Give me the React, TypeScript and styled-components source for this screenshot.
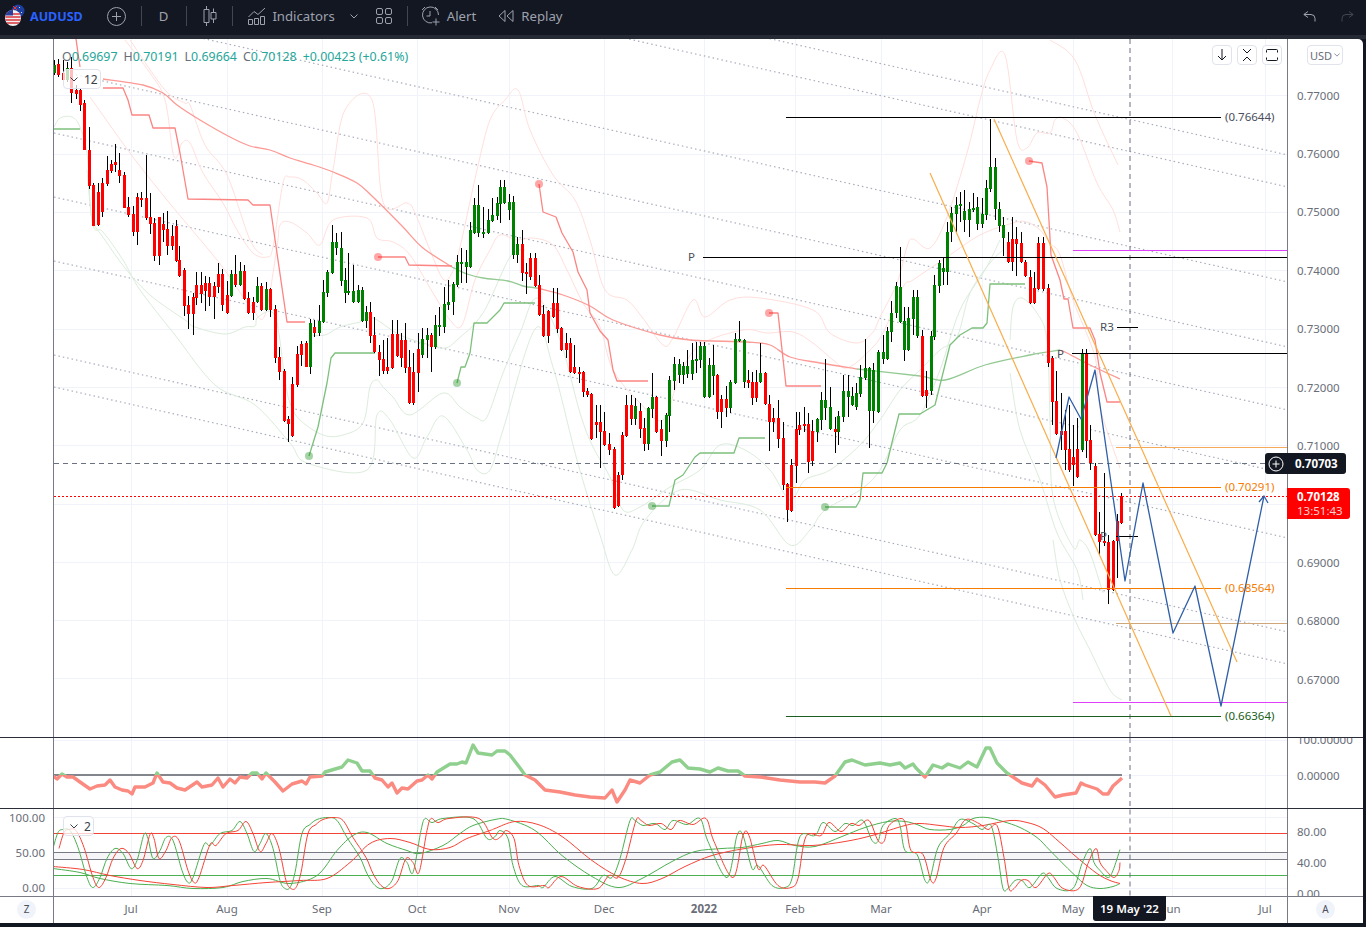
import React from "react";
import styled, { createGlobalStyle } from "styled-components";

const GlobalStyle = createGlobalStyle`
  html, body { margin: 0; padding: 0; background: #131722; overflow: hidden; }
  * { box-sizing: border-box; }
`;

const FONT = `"Noto Sans", "Open Sans", sans-serif`;

const Page = styled.div`
  width: 1366px;
  height: 927px;
  display: flex;
  flex-direction: column;
  background: #131722;
  font-family: ${FONT};
  overflow: hidden;
`;

const Toolbar = styled.div`
  height: 35px;
  flex: none;
  display: flex;
  align-items: center;
  padding-bottom: 3px;
  background: #131722;
  color: #9ea2ae;
  font-size: 13.2px;
`;

const ToolSlot = styled.div<{ $left: number }>`
  margin-left: ${(p) => p.$left}px;
  display: flex;
  align-items: center;
  flex: none;
`;

const ToolSep = styled.div<{ $left: number }>`
  margin-left: ${(p) => p.$left}px;
  width: 1px;
  height: 20px;
  flex: none;
  background: #434651;
`;

const Symbol = styled.span`
  color: #2962ff;
  font-weight: 700;
  font-size: 12.5px;
`;

const ToolRight = styled.div`
  margin-left: auto;
  display: flex;
  align-items: center;
  gap: 25px;
  padding-right: 12px;
`;

const Strip = styled.div`
  height: 4px;
  flex: none;
  background: #262a35;
`;

const Chart = styled.div`
  position: relative;
  width: 1363px;
  height: 884px;
  flex: none;
  display: flex;
  flex-direction: column;
  background: #fff;
  border-top-right-radius: 5px;
  overflow: hidden;
`;

const PaneRow = styled.div<{ $height: number; $top?: string }>`
  height: ${(p) => p.$height}px;
  flex: none;
  display: flex;
  border-top: ${(p) => p.$top ?? "none"};
`;

const LeftAxis = styled.div`
  position: relative;
  width: 54px;
  flex: none;
  border-right: 1px solid #787b86;
  color: #6a6d78;
  font-size: 11.5px;
  text-align: right;
  padding-right: 8px;
  overflow: hidden;
`;

const Pane = styled.div`
  position: relative;
  width: 1233px;
  flex: none;
  overflow: hidden;
`;

const ChartSvg = styled.svg`
  display: block;
  width: 100%;
  height: 100%;
`;

const RightAxis = styled.div<{ $top: number }>`
  width: 76px;
  flex: none;
  border-left: 1px solid #787b86;
  padding-left: 9px;
  padding-top: ${(p) => p.$top}px;
  color: #6a6d78;
  font-size: 11.5px;
  overflow: hidden;
`;

const Tick = styled.div<{ $height: number; $end?: boolean }>`
  height: ${(p) => p.$height}px;
  display: flex;
  align-items: center;
  justify-content: ${(p) => (p.$end ? "flex-end" : "flex-start")};
  white-space: nowrap;
`;

const TickColumn = styled.div<{ $shift: number }>`
  margin-top: ${(p) => p.$shift}px;
`;

const TimeRow = styled.div`
  height: 27px;
  flex: none;
  display: flex;
  align-items: center;
  border-top: 1px solid #787b86;
  color: #6a6d78;
  font-size: 11.5px;
`;

const Corner = styled.div<{ $line?: "left" | "right" }>`
  width: ${(p) => (p.$line === "left" ? 76 : 54)}px;
  height: 100%;
  flex: none;
  display: flex;
  align-items: center;
  justify-content: center;
  padding-bottom: 2px;
  border-right: ${(p) => (p.$line === "right" ? "1px solid #787b86" : "none")};
  border-left: ${(p) => (p.$line === "left" ? "1px solid #787b86" : "none")};
`;

const RoundKey = styled.div`
  width: 19px;
  height: 19px;
  border-radius: 50%;
  background: #f0f3fa;
  color: #4a4e5a;
  font-size: 10px;
  display: flex;
  align-items: center;
  justify-content: center;
`;

const TimeTrack = styled.div`
  width: 1233px;
  flex: none;
  display: flex;
  padding-bottom: 3px;
  overflow: hidden;
`;

const TimeCell = styled.div<{ $width: number; $bold?: boolean }>`
  width: ${(p) => p.$width}px;
  flex: none;
  font-weight: ${(p) => (p.$bold ? 700 : 400)};
  span { display: inline-block; transform: translateX(-50%); }
`;

const DateTag = styled.div`
  position: absolute;
  left: 1093px;
  bottom: 2px;
  width: 73px;
  height: 25px;
  padding-bottom: 1px;
  background: #131722;
  color: #fff;
  font-size: 11.5px;
  font-weight: 600;
  border-radius: 0 0 3px 3px;
  display: flex;
  align-items: center;
  justify-content: center;
`;

const Legend = styled.div`
  position: absolute;
  left: 8px;
  top: 9px;
  display: flex;
  gap: 6px;
  font-size: 12.4px;
  color: #6a6d78;
  white-space: nowrap;
  b { font-weight: 400; color: #26a69a; }
`;

const Chip = styled.div<{ $left: number; $top: number; $width: number }>`
  position: absolute;
  left: ${(p) => p.$left}px;
  top: ${(p) => p.$top}px;
  width: ${(p) => p.$width}px;
  height: 20px;
  display: flex;
  align-items: center;
  gap: 6px;
  padding-left: 6px;
  background: rgba(255, 255, 255, 0.75);
  border: 1px solid #e0e3eb;
  border-radius: 4px;
  color: #3a3e4a;
  font-size: 12px;
`;

const ChartButtons = styled.div`
  position: absolute;
  right: 5px;
  top: 6px;
  display: flex;
  gap: 5px;
`;

const ChartButton = styled.div`
  width: 20px;
  height: 20px;
  background: #fff;
  border: 1px solid #e0e3eb;
  border-radius: 4px;
  display: flex;
  align-items: center;
  justify-content: center;
`;

const CurrencyButton = styled.div`
  position: absolute;
  left: 1307px;
  top: 6px;
  width: 36px;
  height: 20px;
  border: 1px solid #e0e3eb;
  border-radius: 4px;
  display: flex;
  align-items: center;
  justify-content: center;
  gap: 2px;
  color: #6a6d78;
  font-size: 11px;
`;

const CrossTag = styled.div`
  position: absolute;
  left: 1265px;
  top: 414px;
  width: 81px;
  height: 21px;
  display: flex;
  align-items: center;
  background: #131722;
  color: #fff;
  border-radius: 3px;
  font-size: 11.5px;
  font-weight: 700;
  padding-left: 2px;
  gap: 10px;
`;

const PriceTag = styled.div`
  position: absolute;
  left: 1287px;
  top: 449px;
  width: 63px;
  height: 31px;
  display: flex;
  flex-direction: column;
  justify-content: center;
  padding-left: 10px;
  background: #ff0000;
  color: #fff;
  border-radius: 0 3px 3px 0;
  font-size: 11.5px;
  font-weight: 700;
  line-height: 14px;
  span { font-weight: 400; color: #ffd0d0; }
`;

const ChartLabel = styled.text<{ $color?: string }>`
  font-family: ${FONT};
  font-size: 11.5px;
  fill: ${(p) => p.$color ?? "#4a4e5a"};
`;

const poly = (a: number[]) => {
  let d = "";
  for (let i = 0; i < a.length; i += 2) d += `${i ? "L" : "M"}${a[i]} ${a[i + 1]}`;
  return d;
};

// catmull-rom through the points, for the curved studies
const curve = (a: number[]) => {
  const n = a.length / 2;
  const px = (i: number) => a[2 * Math.max(0, Math.min(n - 1, i))];
  const py = (i: number) => a[2 * Math.max(0, Math.min(n - 1, i)) + 1];
  let d = `M${a[0]} ${a[1]}`;
  for (let i = 0; i < n - 1; i++) {
    const c1x = px(i) + (px(i + 1) - px(i - 1)) / 6;
    const c1y = py(i) + (py(i + 1) - py(i - 1)) / 6;
    const c2x = px(i + 1) - (px(i + 2) - px(i)) / 6;
    const c2y = py(i + 1) - (py(i + 2) - py(i)) / 6;
    d += `C${c1x.toFixed(1)} ${c1y.toFixed(1)} ${c2x.toFixed(1)} ${c2y.toFixed(1)} ${px(i + 1)} ${py(i + 1)}`;
  }
  return d;
};

// x, body top, body bottom, high, low, colour
const CANDLES = `
54 65 73 60 75 g;58 64 75 59 77 r;62.5 73 80 60 83 r;67 68 80 62 82 g;71 68 93 57 103 r;75.5 90 94 85 99 r;80 90 105 88 111 r;84 103 150 100 150 r;
88.5 150 186 127 189 r;93 185 226 183 226 r;97.5 192 225 183 226 r;102 183 212 178 217 r;106.5 170 184 156 186 r;111 164 171 160 173 r;115 162 165 144 172 r;119 170 176 153 183 r;
123.5 175 208 172 208 r;128 207 215 197 217 r;132.5 214 232 206 236 r;136.5 197 232 193 245 r;141 198 200 192 207 r;145.5 198 218 155 220 r;150 217 224 193 234 r;154 223 256 218 261 r;
158.5 217 256 217 265 r;163 224 230 213 242 r;167 229 246 211 255 r;171.5 236 246 225 250 r;175.7 226 261 220 262 r;179 260 276 246 277 r;183.5 270 306 268 316 r;188 305 314 296 329 r;
192.5 297 314 293 335 r;196 285 298 272 305 r;201 285 294 272 303 r;205 283 291 276 311 r;209 283 297 277 306 r;214 286 297 282 319 r;218 274 287 263 293 r;222 274 305 269 311 r;
227 295 313 281 314 r;231 274 296 270 297 g;235 274 285 255 287 r;240 271 285 262 286 g;244 271 299 265 300 r;248 298 313 292 314 r;253 302 313 297 320 r;257 286 302 277 303 g;
261 286 310 283 311 r;266 289 310 282 311 g;270 289 310 288 317 r;274.7 309 358 305 363 r;279 357 372 347 380 r;283.7 371 421 369 422 r;288 419 424 416 442 r;292 384 436 377 437 r;
296.7 354 385 346 387 r;301 344 355 341 366 r;305.7 343 367 341 367 r;309.7 323 367 319 374 g;314 327 333 320 337 r;318.7 321 333 305 336 g;322.7 292 322 280 323 g;327 272 293 270 297 g;
331.7 242 273 225 274 g;335.7 242 248 233 255 g;340.7 248 281 232 286 g;344.7 280 293 268 303 g;348 291 293 253 295 g;353 291 302 265 303 g;357.7 290 302 285 303 g;361.7 290 321 287 322 g;
366 312 321 306 328 g;370 312 336 302 343 r;374 335 352 317 353 r;379 352 360 345 376 r;383 359 371 340 374 r;387 367 371 338 374 r;392 334 368 320 369 r;396.7 334 356 320 357 r;
400.7 340 358 333 367 r;405 340 368 323 373 r;409 367 403 350 404 r;413 372 403 353 405 r;418 349 373 333 392 r;422 339 355 328 358 g;426.7 335 340 328 358 g;431 335 347 333 372 r;
435 325 347 315 349 g;439 325 327 307 336 g;444 304 327 287 333 g;448 302 305 280 310 g;452.7 284 302 282 315 g;457 262 285 255 287 g;461 262 263 248 283 g;465.7 262 267 250 283 g;
470 230 267 222 268 g;474 205 233 198 234 g;478 205 233 185 237 g;483 232 233 207 238 g;487.7 220 233 209 234 g;491.7 215 221 198 222 g;496.7 203 216 197 220 g;500 187 204 180 223 g;
504 187 203 180 204 g;509 202 210 194 220 g;513 202 255 196 259 g;517 244 255 237 263 g;522 244 273 230 281 r;526 272 273 263 294 r;530 258 277 253 280 r;535 258 286 253 287 r;
539 285 315 275 316 r;543 314 336 305 337 r;548 311 336 310 343 r;553 303 317 288 318 r;556.5 303 329 288 333 r;561 328 350 327 351 r;566 343 350 333 358 r;569.5 343 372 338 373 r;
574 367 373 345 374 r;578.5 372 373 367 383 r;582.7 372 392 371 397 r;587 391 395 388 397 r;591 394 439 393 440 r;596 422 425 405 438 r;600 422 432 405 468 r;604 431 445 412 446 r;
609 444 450 433 455 r;613.7 449 508 447 509 r;617.7 475 506 472 507 r;622 435 475 432 480 r;626 405 436 395 437 r;630.7 405 419 395 425 r;635 406 419 398 425 g;639.7 411 429 403 438 r;
643.7 428 444 418 451 r;648 408 444 407 450 g;652 397 409 373 418 g;656 397 432 396 433 r;661 429 441 420 456 r;665.7 415 441 413 447 g;669 380 416 376 432 g;674 364 381 357 390 g;
678.7 364 375 359 383 g;682.7 366 375 362 384 g;687 366 374 350 378 g;691.7 360 374 343 380 g;695.7 359 361 342 373 g;700 346 360 342 368 g;704 346 397 342 398 g;709 365 397 358 398 g;
713 365 376 345 395 g;717 375 412 374 419 r;721 399 412 395 428 r;726 399 408 386 417 r;730 382 408 380 413 g;734.7 339 383 333 384 g;739 339 341 321 342 g;743.7 340 382 339 388 g;
747.7 380 383 370 388 r;752 382 398 372 405 r;756 382 398 370 402 r;760 373 382 343 383 g;765 373 404 372 405 r;769 404 422 395 451 r;773 418 422 408 432 r;778 418 439 400 448 r;
783 438 485 422 490 r;787 484 510 483 522 r;791 465 511 459 512 r;795.7 429 466 412 483 r;799 425 430 412 435 r;804 424 426 407 432 r;808 424 462 413 473 r;812 431 461 420 466 r;
817 419 432 418 442 g;821 400 420 392 430 g;825 400 408 359 420 g;830 407 429 387 430 g;835 429 432 417 453 r;838 416 432 411 445 g;843 391 417 375 422 g;847.7 391 397 375 417 g;
851.7 396 405 387 406 g;856 393 407 383 410 g;860 377 394 365 397 g;864.7 368 378 339 380 g;869 368 411 367 448 g;873 370 411 363 423 g;878 352 412 350 413 g;882.7 352 359 335 364 g;
886.7 331 359 327 360 g;891 313 332 301 342 g;895.7 286 313 282 318 g;899.7 287 322 247 323 g;904 321 350 307 361 g;908 318 350 307 351 g;912.7 297 319 290 335 g;917 297 336 290 338 g;
921.7 336 396 330 397 r;925.7 390 396 371 408 r;930.7 336 391 331 395 g;934 285 337 275 340 g;938.7 263 286 260 293 g;943 268 272 257 285 g;947 232 272 222 285 g;951 213 232 207 242 g;
956 205 214 197 232 g;960 204 206 192 222 g;964 211 220 190 232 g;969 209 220 202 237 g;973 208 210 193 212 g;977 207 224 197 230 g;982 214 224 198 228 g;986 188 215 180 220 g;
990 167 189 119 192 g;995 167 209 158 220 g;999 209 226 202 232 g;1003 225 238 217 256 g;1008 242 262 232 263 r;1012 239 262 217 271 r;1016 239 244 227 276 r;1021 243 262 232 263 r;
1025 262 276 260 277 r;1030 277 303 270 304 r;1034 288 303 272 304 r;1038 243 289 237 290 r;1043 243 289 237 291 r;1047.5 288 363 284 367 r;1051.5 358 402 356 425 r;1055.5 401 434 371 435 r;
1060.5 431 435 393 450 r;1064.5 431 450 410 470 r;1068.5 449 470 405 472 r;1072.5 457 465 425 486 r;1077 449 477 418 478 r;1081.5 353 450 349 452 g;1086 353 441 349 458 r;1090 440 463 425 470 r;
1094.5 466 535 463 536 r;1099 534 542 512 555 r;1103.5 541 543 473 546 r;1108 542 590 535 604 r;1112.5 541 590 540 591 r;1117 521 541 514 578 r;1121 496 523 493 524 r
`
  .trim()
  .split(";")
  .map((row) => row.trim().split(" "));

const Candles = () => (
  <g shapeRendering="crispEdges">
    {CANDLES.map((c, i) => {
      const x = Math.round(+c[0]);
      const up = c[5] === "g";
      return (
        <g key={i}>
          <rect x={x} y={+c[3]} width={1} height={+c[4] - +c[3]} fill="#000" />
          <rect x={x - 1} y={+c[1]} width={3} height={Math.max(+c[2] - +c[1], 1.5)} fill={up ? "#008000" : "#ff0000"} />
        </g>
      );
    })}
  </g>
);

const V_GRID = [131, 227, 322, 417, 509, 604, 704, 795, 881, 982, 1073, 1172, 1265];
const H_GRID = [95.5, 154, 212.5, 270.5, 329, 387.5, 445.5, 504, 562, 620.5, 678.5];
const PRICE_TICKS = ["0.77000", "0.76000", "0.75000", "0.74000", "0.73000", "0.72000", "0.71000", "0.70000", "0.69000", "0.68000", "0.67000"];
const CHANNELS = [-122, -90, 5, 70, 133, 197, 261, 355, 387];

const PINK = [
  [125, 40, 150, 73, 165, 100, 173, 153, 178, 155, 182, 143, 190, 143, 203, 173, 223, 203, 237, 230, 253, 253, 267, 257, 273, 247, 283, 183, 290, 177, 303, 180, 317, 193, 327, 203, 333, 170, 345, 110, 372, 100, 383, 202, 407, 203, 415, 213, 430, 250, 443, 279, 452, 273, 460, 247, 477, 170, 490, 120, 505, 100, 518, 90, 530, 130, 553, 175, 575, 200, 590, 240, 605, 290, 627, 300, 642, 317, 663, 345, 673, 338, 693, 300, 705, 317, 730, 300, 760, 298, 813, 310, 830, 333, 857, 343, 873, 332, 880, 317, 897, 283, 907, 247, 913, 239, 930, 248, 947, 217, 967, 153, 980, 100, 990, 70, 1005, 55, 1017, 140, 1027, 148, 1037, 133, 1050, 133, 1055, 120, 1063, 118, 1077, 133, 1097, 183, 1113, 210, 1120, 232],
  [90, 97, 130, 153, 167, 200, 217, 260, 235, 285, 253, 310, 265, 315, 277, 247, 280, 225, 290, 222, 307, 233, 320, 245, 333, 220, 367, 218, 377, 238, 393, 242, 410, 255, 433, 293, 450, 320, 462, 325, 475, 280, 490, 250, 500, 235, 517, 240, 533, 238, 553, 245, 567, 270, 583, 303, 600, 327, 613, 370, 640, 403, 663, 420, 680, 375, 700, 345, 743, 330, 767, 333, 793, 332, 813, 343, 833, 360, 847, 368, 867, 353, 883, 333, 903, 287, 913, 280, 947, 257, 980, 235, 1013, 223, 1027, 222, 1040, 230, 1050, 243, 1060, 255, 1073, 300, 1095, 357, 1100, 407, 1120, 468],
  [130, 40, 165, 90, 185, 103, 190, 105, 205, 145, 227, 175, 250, 240, 263, 255],
  [1050, 40, 1075, 60, 1095, 115, 1118, 165],
];

const PALE_GREEN = [
  [54, 127, 60, 118, 72, 117, 80, 127, 87, 153, 90, 200, 93, 222, 105, 240, 125, 268, 150, 295, 185, 320, 195, 327, 225, 334, 245, 327, 255, 326, 258, 317, 275, 316, 285, 380, 290, 403, 300, 420, 323, 435, 343, 435, 363, 423, 370, 387, 377, 380, 383, 387, 393, 397, 410, 415, 443, 393, 460, 407, 477, 418, 487, 417, 503, 373, 520, 333, 537, 298, 560, 340, 580, 413, 593, 447, 610, 477, 623, 510, 640, 507, 670, 487, 700, 470, 720, 445, 745, 450, 770, 470, 790, 500, 805, 480, 830, 470, 860, 445, 880, 420, 900, 390, 920, 370, 940, 350, 957, 337, 970, 293, 990, 263, 1003, 250],
  [87, 170, 93, 225, 103, 232, 123, 260, 140, 290, 175, 335, 215, 385, 255, 405, 290, 443, 307, 463, 367, 470, 377, 415, 390, 420, 413, 458, 427, 437, 443, 416, 467, 450, 477, 470, 490, 470, 503, 430, 535, 329, 553, 367, 577, 460, 600, 535, 615, 575, 632, 550, 645, 520, 680, 490, 720, 500, 760, 510, 790, 545, 810, 530, 825, 510, 860, 490, 880, 470, 900, 430, 920, 415, 940, 370, 960, 310, 985, 270, 1000, 240],
  [1010, 340, 1013, 307, 1022, 298, 1037, 313, 1047, 340, 1050, 420, 1053, 497, 1073, 547, 1080, 540, 1090, 553, 1103, 593],
  [310, 335, 325, 335, 340, 327, 360, 322, 373, 318, 400, 335, 430, 345, 445, 348, 457, 340, 483, 313, 510, 257, 525, 250],
  [1053, 540, 1060, 580, 1075, 620, 1090, 650, 1110, 690, 1122, 700],
  [1010, 373, 1020, 430, 1040, 480, 1057, 533, 1077, 570, 1083, 600],
];

const RED_STEPS = [
  [76, 39, 80, 67],
  [103, 88, 123, 88, 128, 100, 132, 115, 149, 115, 153, 128, 175, 128, 180, 153, 188, 199, 248, 200, 253, 205, 270, 205, 287, 322, 305, 322],
  [378, 257, 405, 257, 409, 265, 452, 266],
  [539, 184, 543, 212, 556, 217, 562, 233, 573, 252, 578, 272, 587, 290, 590, 313, 600, 331, 608, 340, 613, 370, 617, 381, 648, 381],
  [769, 313, 778, 313, 786, 386, 821, 386],
  [1029, 161, 1042, 163, 1047, 187, 1051, 255, 1060, 280, 1064, 299, 1068, 299, 1073, 328, 1090, 328, 1095, 340, 1100, 373, 1107, 402, 1120, 402],
];

const GREEN_STEPS = [
  [54, 129, 80, 129],
  [309, 456, 318, 427, 327, 383, 331, 358, 335, 353, 375, 353],
  [457, 383, 461, 367, 465, 367, 470, 353, 474, 323, 487, 323, 500, 310, 504, 303, 535, 303],
  [652, 506, 669, 506, 675, 480, 683, 475, 695, 457, 700, 453, 734, 453, 739, 438, 765, 438],
  [825, 507, 856, 507, 860, 500, 863, 473, 882, 473, 887, 463, 899, 414, 920, 414, 935, 405, 950, 345, 960, 335, 972, 328, 983, 328, 987, 323, 990, 284, 1025, 284],
];

const RED_DOTS = [[378, 257], [539, 184], [769, 313], [1029, 161]];
const GREEN_DOTS = [[309, 456], [457, 383], [652, 506], [825, 507]];

const MA_RED = [
  [103, 79, 143, 85, 163, 93, 177, 105, 200, 120, 230, 137, 250, 146, 270, 150, 290, 158, 313, 165, 333, 172, 357, 183, 373, 197, 403, 227, 423, 248, 452, 267],
  [537, 288, 563, 295, 590, 306, 613, 320, 660, 335, 690, 340, 747, 342, 770, 345, 790, 357, 820, 363, 857, 369],
  [1060, 350, 1067, 353, 1090, 365, 1120, 379],
];
const MA_GREEN = [
  [452, 267, 467, 274, 483, 278, 508, 281, 523, 286, 537, 288],
  [857, 369, 920, 376, 945, 380, 985, 365, 1030, 355, 1060, 350],
];

const BLUE = [1056, 458, 1069, 397, 1081, 419, 1095, 370, 1125, 581, 1143, 483, 1173, 633, 1195, 586, 1221, 706, 1264, 496];

const OSC = [
  53, 776, 57, 779, 62, 774, 67, 777, 73, 777, 80, 782, 90, 789, 97, 786, 105, 785, 110, 780, 115, 787, 122, 790, 128, 791, 132, 794, 135, 787, 145, 787, 153, 783, 157, 773, 163, 782, 170, 783, 177, 788, 185, 790, 197, 782, 202, 787, 212, 785, 218, 778, 223, 787, 230, 779, 235, 783, 240, 777, 247, 778, 252, 773, 257, 773, 262, 779, 266, 773, 275, 782, 283, 791, 292, 784, 302, 781, 306, 784, 310, 777, 322, 776, 325, 772, 342, 767, 348, 760, 357, 763, 362, 771, 370, 771, 375, 778, 382, 780, 388, 787, 392, 783, 397, 793, 402, 788, 408, 789, 417, 781, 422, 780, 428, 775, 432, 779, 437, 772, 450, 764, 457, 764, 462, 762, 466, 763, 473, 745, 478, 753, 492, 755, 497, 751, 505, 751, 510, 755, 520, 768, 525, 775, 535, 780, 545, 790, 560, 792, 575, 795, 590, 797, 605, 798, 612, 790, 617, 802, 625, 790, 630, 780, 640, 783, 650, 775, 660, 772, 672, 762, 680, 760, 688, 768, 700, 769, 710, 772, 718, 768, 728, 771, 738, 771, 745, 776, 760, 777, 780, 780, 800, 782, 815, 782, 825, 783, 835, 776, 845, 762, 852, 760, 865, 765, 880, 763, 890, 765, 900, 763, 905, 768, 913, 764, 916, 768, 925, 777, 933, 765, 942, 768, 948, 764, 960, 768, 968, 762, 977, 767, 986, 748, 990, 748, 997, 763, 1007, 773, 1022, 783, 1032, 786, 1037, 779, 1045, 785, 1055, 797, 1063, 795, 1076, 793, 1081, 783, 1085, 785, 1097, 789, 1103, 794, 1108, 794, 1113, 786, 1122, 778,
];

const FAST = [
  53, 848, 58, 832, 63, 829, 70, 830, 78, 847, 87, 877, 93, 887, 100, 877, 107, 858, 115, 848, 123, 853, 131, 868, 137, 860, 144, 834, 148, 838, 153, 858, 160, 850, 166, 837, 173, 840, 182, 870, 188, 882, 193, 877, 204, 844, 210, 845, 220, 833, 232, 830, 240, 821, 247, 833, 254, 851, 260, 843, 266, 833, 273, 848, 280, 880, 285, 888, 290, 887, 295, 872, 302, 833, 310, 824, 317, 819, 328, 817, 337, 820, 347, 837, 360, 857, 367, 873, 375, 885, 383, 888, 392, 880, 400, 858, 407, 862, 413, 872, 421, 830, 425, 818, 432, 822, 443, 818, 473, 818, 487, 838, 495, 836, 500, 830, 508, 838, 513, 865, 522, 885, 538, 885, 543, 887, 555, 876, 572, 886, 592, 888, 603, 875, 612, 877, 620, 858, 630, 820, 635, 820, 643, 825, 655, 823, 665, 829, 673, 820, 687, 824, 700, 818, 708, 841, 727, 877, 737, 835, 743, 835, 752, 868, 758, 865, 772, 885, 785, 887, 792, 878, 800, 836, 815, 835, 823, 822, 835, 831, 845, 823, 853, 825, 863, 820, 872, 840, 878, 841, 883, 825, 895, 818, 900, 825, 905, 850, 917, 854, 925, 880, 930, 878, 938, 847, 950, 833, 960, 819, 973, 823, 982, 829, 991, 825, 998, 857, 1003, 888, 1008, 888, 1015, 880, 1022, 880, 1030, 887, 1042, 873, 1048, 877, 1057, 888, 1073, 888, 1082, 863, 1090, 848, 1094, 862, 1100, 870, 1108, 877, 1113, 870, 1120, 849,
];

const shifted = (a: number[], dx: number, end: number[]) => {
  const out: number[] = [];
  for (let i = 0; i < a.length; i += 2) if (a[i] + dx < end[0]) out.push(a[i] + dx, a[i + 1]);
  return out.concat(end);
};

const SLOW_GREEN = [53, 868, 80, 872, 100, 878, 130, 883, 167, 885, 193, 888, 223, 887, 243, 881, 267, 878, 290, 883, 317, 875, 337, 850, 353, 835, 367, 832, 387, 843, 407, 850, 420, 853, 443, 845, 460, 833, 473, 825, 495, 819, 508, 819, 535, 830, 562, 855, 592, 876, 618, 887, 642, 878, 672, 861, 695, 851, 722, 848, 742, 847, 762, 843, 778, 840, 795, 845, 815, 846, 842, 836, 865, 827, 888, 821, 905, 821, 917, 824, 930, 829, 950, 829, 963, 825, 973, 818, 987, 817, 1003, 821, 1020, 827, 1037, 837, 1050, 850, 1073, 873, 1087, 885, 1100, 888, 1113, 886, 1120, 883];
const SLOW_RED = [53, 866, 83, 869, 110, 875, 140, 880, 173, 884, 207, 887, 233, 885, 267, 882, 300, 880, 327, 878, 350, 862, 370, 843, 390, 838, 410, 842, 430, 849, 450, 847, 467, 838, 490, 830, 495, 828, 515, 821, 538, 824, 562, 836, 592, 860, 618, 876, 642, 883, 662, 878, 685, 866, 712, 855, 745, 848, 778, 844, 812, 845, 845, 841, 872, 835, 905, 825, 920, 823, 940, 825, 960, 827, 983, 825, 1010, 820, 1027, 822, 1043, 828, 1060, 842, 1077, 857, 1097, 873, 1110, 880, 1120, 883];

const Grid = ({ rows }: { rows: number[] }) => (
  <g stroke="#f0f3fa" strokeWidth={1} shapeRendering="crispEdges">
    {V_GRID.map((x) => <line key={x} x1={x} x2={x} y1={30} y2={900} />)}
    {rows.map((y) => <line key={y} x1={54} x2={1288} y1={y} y2={y} />)}
  </g>
);

const Crosshair = ({ y1, y2 }: { y1: number; y2: number }) => (
  <line x1={1130} x2={1130} y1={y1} y2={y2} stroke="#6a7180" strokeDasharray="5 4" />
);

const MainPlot = () => (
  <ChartSvg viewBox="54 39 1233 698">
    <Grid rows={H_GRID} />
    {CHANNELS.map((c) => (
      <line key={c} x1={54} y1={c} x2={1288} y2={c + 277} stroke="#a9adbb" strokeWidth={1.2} strokeDasharray="1.5 3" />
    ))}
    <g fill="none" strokeWidth={1}>
      {PINK.map((p, i) => <path key={i} d={curve(p)} stroke="#ffdfdc" />)}
      {PALE_GREEN.map((p, i) => <path key={i} d={curve(p)} stroke="#dcecdc" />)}
    </g>
    <g fill="none" strokeWidth={1.3} strokeLinejoin="round">
      {MA_RED.map((p, i) => <path key={i} d={curve(p)} stroke="#fc9a95" />)}
      {MA_GREEN.map((p, i) => <path key={i} d={curve(p)} stroke="#93c993" />)}
      {RED_STEPS.map((p, i) => <path key={i} d={poly(p)} stroke="#fb8583" />)}
      {GREEN_STEPS.map((p, i) => <path key={i} d={poly(p)} stroke="#7cc07c" />)}
    </g>
    {RED_DOTS.map(([x, y]) => <circle key={x} cx={x} cy={y} r={4} fill="#ff0000" fillOpacity={0.35} />)}
    {GREEN_DOTS.map(([x, y]) => <circle key={x} cx={x} cy={y} r={4} fill="#008000" fillOpacity={0.35} />)}

    <g shapeRendering="crispEdges" strokeWidth={1}>
      <line x1={54} x2={1265} y1={463} y2={463} stroke="#6a7180" strokeDasharray="5 4" />
      <line x1={54} x2={1288} y1={496.5} y2={496.5} stroke="#ff0000" strokeDasharray="1.5 2.5" />
    </g>
    <Candles />
    <Crosshair y1={39} y2={737} />

    <g shapeRendering="crispEdges" strokeWidth={1}>
      <line x1={786} x2={1221} y1={117.5} y2={117.5} stroke="#000" />
      <line x1={703} x2={1288} y1={257.5} y2={257.5} stroke="#000" />
      <line x1={1072} x2={1288} y1={353.5} y2={353.5} stroke="#000" />
      <line x1={1117} x2={1138} y1={327.5} y2={327.5} stroke="#000" />
      <line x1={1116} x2={1138} y1={536.5} y2={536.5} stroke="#000" />
      <line x1={786} x2={1221} y1={487.5} y2={487.5} stroke="#f57c00" />
      <line x1={786} x2={1221} y1={588.5} y2={588.5} stroke="#f57c00" />
      <line x1={1116} x2={1288} y1={447.5} y2={447.5} stroke="#f5a95a" />
      <line x1={1116} x2={1288} y1={623.5} y2={623.5} stroke="#cfa77a" />
      <line x1={1073} x2={1288} y1={250.5} y2={250.5} stroke="#e040fb" />
      <line x1={1073} x2={1288} y1={702.5} y2={702.5} stroke="#e040fb" />
      <line x1={786} x2={1221} y1={716.5} y2={716.5} stroke="#1b5e20" />
    </g>
    <g fill="none" stroke="#f9ad4b" strokeWidth={1.2}>
      <path d="M994 119L1237 662" />
      <path d="M930 173L1171 716" />
    </g>
    <g fill="none" stroke="#2f5fa8" strokeWidth={1.3} strokeLinejoin="round">
      <path d={poly(BLUE)} />
      <path d="M1259 502L1264 496L1268 503" />
    </g>

    <ChartLabel x={1225} y={121}>(0.76644)</ChartLabel>
    <ChartLabel x={1225} y={491} $color="#f57c00">(0.70291)</ChartLabel>
    <ChartLabel x={1225} y={592} $color="#f57c00">(0.68564)</ChartLabel>
    <ChartLabel x={1225} y={720} $color="#1b5e20">(0.66364)</ChartLabel>
    <ChartLabel x={688} y={261}>P</ChartLabel>
    <ChartLabel x={1057} y={358}>P</ChartLabel>
    <ChartLabel x={1100} y={331}>R3</ChartLabel>
    <ChartLabel x={1100} y={540}>P</ChartLabel>
  </ChartSvg>
);

const OscPlot = () => (
  <ChartSvg viewBox="54 738 1233 70">
    <defs>
      <clipPath id="above"><rect x={54} y={738} width={1233} height={37} /></clipPath>
      <clipPath id="below"><rect x={54} y={775} width={1233} height={33} /></clipPath>
    </defs>
    <Grid rows={[740, 775]} />
    <line x1={54} x2={1122} y1={775} y2={775} stroke="#83858d" strokeWidth={2} />
    <g fill="none" strokeWidth={3.4} strokeLinejoin="round">
      <path d={poly(OSC)} stroke="#8fd08f" clipPath="url(#above)" />
      <path d={poly(OSC)} stroke="#fb8a80" clipPath="url(#below)" />
    </g>
    <Crosshair y1={738} y2={808} />
  </ChartSvg>
);

const StochPlot = () => (
  <ChartSvg viewBox="54 809 1233 86">
    <Grid rows={[817, 852, 888]} />
    <rect x={54} y={851.5} width={1233} height={7} fill="#f6f6f8" />
    <g shapeRendering="crispEdges" strokeWidth={1}>
      <line x1={54} x2={1288} y1={832.5} y2={832.5} stroke="#f44336" />
      <line x1={54} x2={1288} y1={851.5} y2={851.5} stroke="#787b86" />
      <line x1={54} x2={1288} y1={858.5} y2={858.5} stroke="#787b86" />
      <line x1={54} x2={1288} y1={874.5} y2={874.5} stroke="#4caf50" />
    </g>
    <g fill="none" strokeWidth={1} strokeLinejoin="round">
      <path d={curve(SLOW_GREEN)} stroke="#4caf50" />
      <path d={curve(SLOW_RED)} stroke="#f44336" />
      <path d={curve(FAST)} stroke="#4caf50" />
      <path d={curve(shifted(FAST, 6, [1120, 862]))} stroke="#f44336" />
    </g>
    <Crosshair y1={809} y2={895} />
  </ChartSvg>
);

const Icon = styled.svg`
  display: block;
  fill: none;
  stroke: currentColor;
  stroke-width: 1;
`;

const Chevron = () => (
  <Icon width="8" height="5" viewBox="0 0 8 5"><path d="M.5.5L4 4 7.500.5" /></Icon>
);

const Logo = () => (
  <svg width="20" height="24" viewBox="0 0 20 24" style={{ display: "block" }}>
    <circle cx="13" cy="7" r="6.5" fill="#1c3fa0" />
    <path d="M10 4l1 1M14 3l.8.8M16 8l.8.8M12 9l.8.8" stroke="#fff" strokeWidth="1" />
    <path d="M8 2l4 4M12 2L8 6" stroke="#e33" strokeWidth="1" />
    <circle cx="8" cy="14" r="8" fill="#f1f1f1" />
    <path d="M1 10h14M0.4 13h15.2M0.4 16h15.2M2 19h12" stroke="#d9363e" strokeWidth="1.6" />
    <path d="M8 6a8 8 0 0 0-7.600 5.500H8z" fill="#2a3f9d" />
  </svg>
);

const TICKS: [string, number, boolean?][] = [
  ["Jul", 131], ["Aug", 227], ["Sep", 322], ["Oct", 417], ["Nov", 509], ["Dec", 604], ["2022", 704, true],
  ["Feb", 795], ["Mar", 881], ["Apr", 982], ["May", 1073], ["Jun", 1172], ["Jul", 1265],
];

export default function App() {
  return (
    <Page>
      <GlobalStyle />
      <Toolbar>
        <ToolSlot $left={5}><Logo /></ToolSlot>
        <ToolSlot $left={5}><Symbol>AUDUSD</Symbol></ToolSlot>
        <ToolSlot $left={24}>
          <Icon width="19" height="19" viewBox="0 0 19 19"><circle cx="9.500" cy="9.500" r="9" /><path d="M9.500 5v9M5 9.500h9" /></Icon>
        </ToolSlot>
        <ToolSep $left={15} />
        <ToolSlot $left={17}><span>D</span></ToolSlot>
        <ToolSep $left={18} />
        <ToolSlot $left={16}>
          <Icon width="14" height="20" viewBox="0 0 14 20"><path d="M3.500 0v3.500M3.500 16.500V20M1 3.500h5v13H1zM10.500 2.500v4M10.500 13v4M8 6.500h5V13H8z" /></Icon>
        </ToolSlot>
        <ToolSep $left={15} />
        <ToolSlot $left={15}>
          <Icon width="18" height="18" viewBox="0 0 18 18"><path d="M.5 10L6 4.500l4 3 7-6.500M.5 17.500v-5h4v5zM6.500 17.500v-6h4v6zM12.500 17.500v-8h4v8z" /></Icon>
        </ToolSlot>
        <ToolSlot $left={6}><span>Indicators</span></ToolSlot>
        <ToolSlot $left={15}><Chevron /></ToolSlot>
        <ToolSlot $left={18}>
          <Icon width="16" height="16" viewBox="0 0 16 16"><rect x=".5" y=".5" width="6" height="6" rx="1.500" /><rect x="9.500" y=".5" width="6" height="6" rx="1.500" /><rect x=".5" y="9.500" width="6" height="6" rx="1.500" /><rect x="9.500" y="9.500" width="6" height="6" rx="1.500" /></Icon>
        </ToolSlot>
        <ToolSep $left={15} />
        <ToolSlot $left={13}>
          <Icon width="20" height="20" viewBox="0 0 20 20"><path d="M11 16.800A8 8 0 1 1 17.500 9M1 4l3-3M14 1l3 3M9 5v5H5.500M15 12.500v7M11.500 16h7" /></Icon>
        </ToolSlot>
        <ToolSlot $left={6}><span>Alert</span></ToolSlot>
        <ToolSlot $left={22}>
          <Icon width="16" height="12" viewBox="0 0 16 12"><path d="M7 .5L1 6l6 5.500zM15 .5L9 6l6 5.500z" /></Icon>
        </ToolSlot>
        <ToolSlot $left={7}><span>Replay</span></ToolSlot>
        <ToolRight>
          <Icon width="13" height="11" viewBox="0 0 13 11" stroke="#9ea2ae"><path d="M5 .5L.8 3.500 5 6.500M1 3.500h7a4 4 0 0 1 4 4v3" /></Icon>
          <Icon width="13" height="11" viewBox="0 0 13 11" color="#434651"><path d="M8 .5l4.200 3L8 6.500M12 3.500H5a4 4 0 0 0-4 4v3" /></Icon>
        </ToolRight>
      </Toolbar>
      <Strip />
      <Chart>
        <PaneRow $height={698}>
          <LeftAxis />
          <Pane>
            <MainPlot />
            <Legend>
              <span>O<b>0.69697</b></span>
              <span>H<b>0.70191</b></span>
              <span>L<b>0.69664</b></span>
              <span>C<b>0.70128</b></span>
              <b>+0.00423 (+0.61%)</b>
            </Legend>
            <Chip $left={9} $top={30} $width={38}>
              <Chevron />
              12
            </Chip>
            <ChartButtons>
              <ChartButton>
                <Icon width="10" height="12" viewBox="0 0 10 12" color="#131722"><path d="M5 0v11M1 7l4 4 4-4" /></Icon>
              </ChartButton>
              <ChartButton>
                <Icon width="10" height="14" viewBox="0 0 10 14" color="#131722"><path d="M1 1l4 4 4-4M1 13l4-4 4 4" /></Icon>
              </ChartButton>
              <ChartButton>
                <Icon width="12" height="12" viewBox="0 0 12 12" color="#131722"><path d="M0.500 3V1.500a1 1 0 0 1 1-1h9a1 1 0 0 1 1 1V3M0.500 9v1.500a1 1 0 0 0 1 1h9a1 1 0 0 0 1-1V9M0 3h1M11 3h1M0 9h1M11 9h1" /></Icon>
              </ChartButton>
            </ChartButtons>
          </Pane>
          <RightAxis $top={27}>
            {PRICE_TICKS.map((t) => <Tick key={t} $height={58.4}>{t}</Tick>)}
          </RightAxis>
        </PaneRow>
        <PaneRow $height={71} $top="1px solid #2a2e39">
          <LeftAxis />
          <Pane><OscPlot /></Pane>
          <RightAxis $top={0}>
            <TickColumn $shift={-17}>
              <Tick $height={36}>100.00000</Tick>
              <Tick $height={36}>0.00000</Tick>
            </TickColumn>
          </RightAxis>
        </PaneRow>
        <PaneRow $height={88} $top="1px solid #2a2e39">
          <LeftAxis>
            <TickColumn $shift={-9}>
              <Tick $height={35} $end>100.00</Tick>
              <Tick $height={35} $end>50.00</Tick>
              <Tick $height={35} $end>0.00</Tick>
            </TickColumn>
          </LeftAxis>
          <Pane>
            <StochPlot />
            <Chip $left={9} $top={7} $width={31}>
              <Chevron />
              2
            </Chip>
          </Pane>
          <RightAxis $top={7}>
            <Tick $height={31}>80.00</Tick>
            <Tick $height={31}>40.00</Tick>
            <Tick $height={31}>0.00</Tick>
          </RightAxis>
        </PaneRow>
        <TimeRow>
          <Corner $line="right"><RoundKey>Z</RoundKey></Corner>
          <TimeTrack>
            <TimeCell $width={77} />
            {TICKS.map(([label, x, bold], i) => (
              <TimeCell key={i} $width={(TICKS[i + 1]?.[1] ?? 1287) - x} $bold={bold}>
                <span>{label}</span>
              </TimeCell>
            ))}
          </TimeTrack>
          <Corner $line="left"><RoundKey>A</RoundKey></Corner>
        </TimeRow>
        <DateTag>19 May '22</DateTag>
        <CurrencyButton>
          USD
          <Icon width="6" height="4" viewBox="0 0 8 5"><path d="M.5.5L4 4 7.500.5" /></Icon>
        </CurrencyButton>
        <CrossTag>
          <Icon width="18" height="18" viewBox="0 0 18 18"><circle cx="9" cy="9" r="7" /><path d="M9 5.500v7M5.500 9h7" /></Icon>
          0.70703
        </CrossTag>
        <PriceTag>
          0.70128
          <span>13:51:43</span>
        </PriceTag>
      </Chart>
    </Page>
  );
}
